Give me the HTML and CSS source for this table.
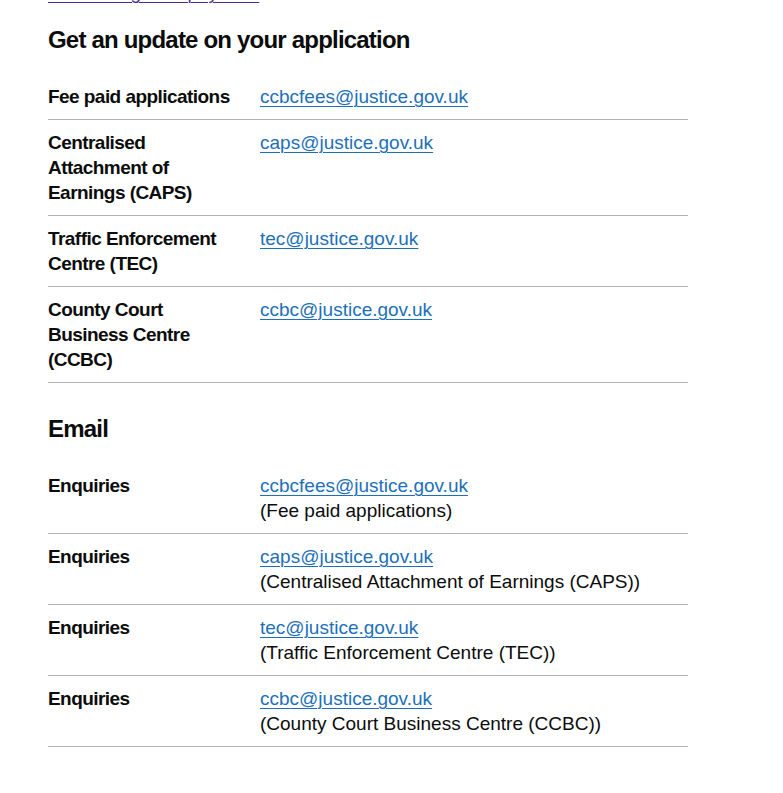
FILE: index.html
```html
<!DOCTYPE html>
<html lang="en">
<head>
<meta charset="utf-8">
<title>Contact</title>
<link rel="stylesheet" href="styles.css">
</head>
<body>
<main class="content">
  <p class="body-text intro"><a class="link link-visited" href="#">Read the guide: pay fees</a></p>

  <h2 class="heading">Get an update on your application</h2>
  <dl class="summary">
    <div class="row">
      <dt class="key">Fee paid applications</dt>
      <dd class="value"><a class="link" href="#">ccbcfees@justice.gov.uk</a></dd>
    </div>
    <div class="row">
      <dt class="key">Centralised Attachment of Earnings (CAPS)</dt>
      <dd class="value"><a class="link" href="#">caps@justice.gov.uk</a></dd>
    </div>
    <div class="row">
      <dt class="key">Traffic Enforcement Centre (TEC)</dt>
      <dd class="value"><a class="link" href="#">tec@justice.gov.uk</a></dd>
    </div>
    <div class="row">
      <dt class="key">County Court Business Centre (CCBC)</dt>
      <dd class="value"><a class="link" href="#">ccbc@justice.gov.uk</a></dd>
    </div>
  </dl>

  <h2 class="heading">Email</h2>
  <dl class="summary">
    <div class="row">
      <dt class="key">Enquiries</dt>
      <dd class="value"><a class="link" href="#">ccbcfees@justice.gov.uk</a><br>(Fee paid applications)</dd>
    </div>
    <div class="row">
      <dt class="key">Enquiries</dt>
      <dd class="value"><a class="link" href="#">caps@justice.gov.uk</a><br>(Centralised Attachment of Earnings (CAPS))</dd>
    </div>
    <div class="row">
      <dt class="key">Enquiries</dt>
      <dd class="value"><a class="link" href="#">tec@justice.gov.uk</a><br>(Traffic Enforcement Centre (TEC))</dd>
    </div>
    <div class="row">
      <dt class="key">Enquiries</dt>
      <dd class="value"><a class="link" href="#">ccbc@justice.gov.uk</a><br>(County Court Business Centre (CCBC))</dd>
    </div>
  </dl>
</main>
</body>
</html>
```

FILE: styles.css
```css
html, body {
  margin: 0;
  padding: 0;
  background: #ffffff;
}

body {
  font-family: "Liberation Sans", Arial, sans-serif;
  color: #0b0c0c;
}

.content {
  width: 640px;
  margin-left: 48px;
}

.body-text {
  font-size: 19px;
  line-height: 25px;
  margin: 0 0 20px;
}

.intro {
  margin-top: -20px;
}

.link {
  color: #1d70b8;
  text-decoration: underline;
  text-decoration-thickness: 1px;
  text-underline-offset: 0.1578em;
}

.link-visited {
  color: #4c2c92;
}

.heading {
  font-size: 24px;
  line-height: 30px;
  font-weight: 700;
  letter-spacing: -0.8px;
  margin: 0 0 19px;
}

.summary {
  margin: 0 0 31px;
  font-size: 19px;
  line-height: 25px;
}

.row {
  display: grid;
  grid-template-columns: 212px 1fr;
  border-bottom: 1px solid #b1b4b6;
}

.key {
  font-weight: 700;
  letter-spacing: -0.55px;
  padding: 10px 20px 10px 0;
  margin: 0;
}

.value {
  padding: 10px 0;
  margin: 0;
}
```
